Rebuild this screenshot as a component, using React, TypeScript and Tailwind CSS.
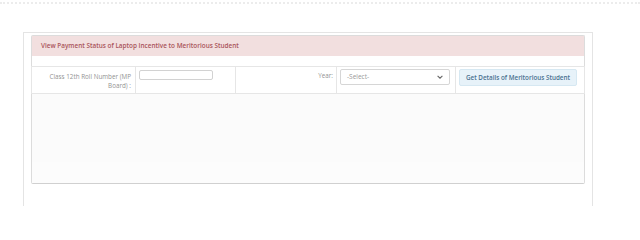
import React from "react";

const font = { fontFamily: '"Open Sans", "Liberation Sans", sans-serif' };

const LaptopIncentiveStatus = () => {
  return (
    <div className="w-[640px] h-[206px] bg-white overflow-hidden" style={font}>
      <div className="mt-[2px] h-[2px] border-t-2 border-dotted border-[#ececec]" />
      <div className="ml-[23px] mt-[28px] w-[570px] h-[180px] border border-b-0 border-[#e4e4e4] bg-white px-[7px] pt-[2px]">
        <div className="h-[149px] border border-[#dcdcdc] border-b-[#d0d0d0] rounded-[2px] bg-[#fcfcfc] flex flex-col">
          <div className="h-[20px] bg-[#f2dfdf] flex items-center pl-[9px] text-[6.4px] font-semibold text-[#a9545a]">
            View Payment Status of Laptop Incentive to Meritorious Student
          </div>
          <div className="h-[10px] bg-white" />
          <div className="flex h-[28px] border-y border-[#e6e6e6] bg-white -mx-px border-x">
            <div className="w-[104px] border-r border-[#e6e6e6] flex flex-col items-end pr-[4px] pt-[5px] text-[6.3px] leading-[9px] text-[#939393]">
              <span>Class 12th Roll Number (MP</span>
              <span>Board) :</span>
            </div>
            <div className="w-[100px] border-r border-[#e6e6e6] pl-[3px] pt-[3px]">
              <div className="w-[74px] h-[10px] border border-[#d2d2d2] rounded-[2px] bg-white" />
            </div>
            <div className="w-[101px] border-r border-[#e6e6e6] flex justify-end pr-[3px] pt-[4px] text-[6.3px] leading-[9px] text-[#939393]">
              Year:
            </div>
            <div className="w-[119px] border-r border-[#e6e6e6] pl-[3px] pt-[2px]">
              <div className="w-[110px] h-[16px] border border-[#d6d6d6] rounded-[2px] bg-white flex items-center justify-between pl-[6px] pr-[6px] text-[6.5px] text-[#999]">
                <span>-Select-</span>
                <svg width="6" height="4" viewBox="0 0 10 6" fill="none">
                  <path d="M1 1l4 4 4-4" stroke="#666" strokeWidth="1.8" />
                </svg>
              </div>
            </div>
            <div className="flex-1 pl-[3px] pt-[2px]">
              <div className="w-[118px] h-[17px] border border-[#d6e8f2] rounded-[2px] bg-[#e7f2f9] flex items-center justify-center text-[6.3px] font-semibold text-[#4a7190]">
                Get Details of Meritorious Student
              </div>
            </div>
          </div>
          <div className="h-[68px] bg-[#fbfbfb]" />
          <div className="flex-1 bg-[#fcfcfc]" />
        </div>
      </div>
    </div>
  );
};

export default function App() {
  return <LaptopIncentiveStatus />;
}
